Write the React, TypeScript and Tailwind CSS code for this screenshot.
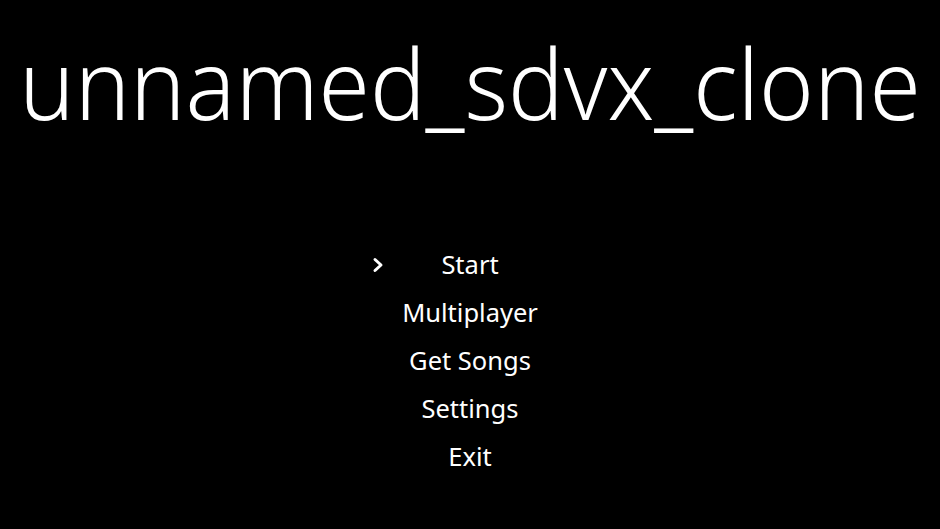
const items = ['Start', 'Multiplayer', 'Get Songs', 'Settings', 'Exit'];

export default function App() {
  const selected = 0;
  return (
    <div
      className="flex h-[529px] w-[940px] flex-col items-center overflow-hidden bg-black text-white"
      style={{ fontFamily: '"Noto Sans", "Open Sans", sans-serif' }}
    >
      <h1 className="mt-[23px] h-[120px] scale-y-[1.04] whitespace-nowrap text-[93px] font-[320] leading-[120px]">
        unnamed_sdvx_clone
      </h1>
      <ul className="mt-[97px] flex flex-col items-center">
        {items.map((item, i) => (
          <li key={item} className="relative h-[48px] text-[25.5px] leading-[48px]">
            {i === selected && (
              <svg
                className="absolute left-[-70px] top-[17px] h-[16px] w-[14px]"
                viewBox="0 0 14 16"
                fill="none"
                stroke="currentColor"
                strokeWidth="3"
                strokeLinecap="round"
                strokeLinejoin="round"
              >
                <path d="M4 2.5 L10 8 L4 13.5" />
              </svg>
            )}
            {item}
          </li>
        ))}
      </ul>
    </div>
  );
}
